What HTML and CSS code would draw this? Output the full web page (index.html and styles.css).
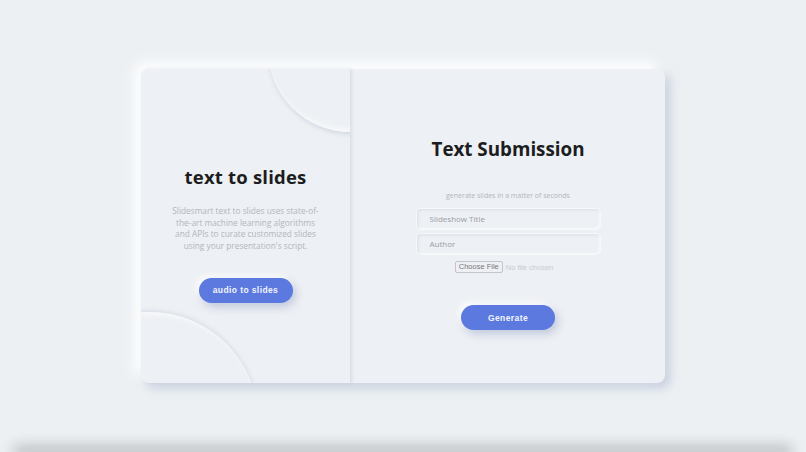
FILE: index.html
```html
<!DOCTYPE html>
<html lang="en">
<head>
<meta charset="utf-8">
<title>Slidesmart</title>
<link rel="stylesheet" href="styles.css">
</head>
<body>
<div class="stage">
  <div class="card">
    <section class="panel panel-left">
      <span class="orb orb-top"></span>
      <span class="orb orb-bottom"></span>
      <h2 class="left-title">text to slides</h2>
      <p class="left-text">Slidesmart text to slides uses state-of-<br>the-art machine learning algorithms<br>and APIs to curate customized slides<br>using your presentation's script.</p>
      <button class="pill pill-left">audio to slides</button>
    </section>
    <section class="panel panel-right">
      <h1 class="right-title">Text Submission</h1>
      <p class="tagline">generate slides in a matter of seconds</p>
      <div class="field">Slideshow Title</div>
      <div class="field">Author</div>
      <div class="file-row">
        <span class="file-btn">Choose File</span>
        <span class="file-none">No file chosen</span>
      </div>
      <button class="pill pill-right">Generate</button>
    </section>
  </div>
</div>
<div class="shelf"></div>
</body>
</html>
```

FILE: styles.css
```css
* { box-sizing: border-box; }
html, body {
  margin: 0;
  height: 452px;
  overflow: hidden;
  background: #ecf0f3;
}
body {
  font-family: "Open Sans", "Liberation Sans", sans-serif;
}
.stage {
  height: 452px;
  padding-top: 69px;
  display: flex;
  justify-content: center;
}
.card {
  width: 524px;
  height: 314px;
  display: grid;
  grid-template-columns: 210px 1fr;
  border-radius: 8px;
  background: #edf0f4;
  box-shadow: -7px -7px 14px rgba(255,255,255,0.95), 5px 5px 10px rgba(170,180,205,0.55);
}
.panel {
  position: relative;
  display: flex;
  flex-direction: column;
  align-items: center;
}
.panel-left {
  overflow: hidden;
  border-radius: 8px 0 0 8px;
  border-right: 1px solid #dde2e9;
  box-shadow: 1px 0 3px rgba(180,190,210,0.35);
  z-index: 1;
  padding-top: 95px;
}
.orb {
  position: absolute;
  border-radius: 50%;
  background: #edf0f4;
}
.orb-top {
  left: 127px;
  top: -101px;
  width: 164px;
  height: 164px;
  box-shadow: 1px 2px 4px rgba(165,178,200,0.4), inset -3px -4px 6px rgba(255,255,255,0.6);
}
.orb-bottom {
  left: -99px;
  top: 243px;
  width: 216px;
  height: 216px;
  box-shadow: 0 -1px 4px rgba(165,178,200,0.35), inset 2px 3px 5px rgba(255,255,255,0.6);
}
.left-title {
  position: relative;
  margin: 0;
  font-size: 18.5px;
  line-height: 26px;
  font-weight: 700;
  color: #1c1d20;
  letter-spacing: 0.2px;
}
.left-text {
  position: relative;
  margin: 15px 0 0;
  font-size: 8.3px;
  line-height: 11.7px;
  color: #b3b6bc;
  text-align: center;
}
.pill {
  position: relative;
  border: 0;
  width: 94px;
  height: 25px;
  border-radius: 13px;
  background: #5b79df;
  color: #f3f5fc;
  font-family: "Liberation Sans", Arial, sans-serif;
  font-weight: 700;
  font-size: 8.5px;
  letter-spacing: 0.4px;
  box-shadow: 3px 4px 8px rgba(110,125,175,0.35), -3px -3px 6px rgba(255,255,255,0.9);
  padding: 0;
}
.pill-left { margin-top: 26px; }
.panel-right { padding-top: 67px; }
.right-title {
  margin: 0;
  font-size: 18.8px;
  line-height: 26px;
  font-weight: 700;
  color: #1c1d20;
}
.tagline {
  margin: 29px 0 0;
  font-size: 7px;
  line-height: 10px;
  color: #b3b6bc;
}
.field {
  width: 183px;
  height: 20px;
  margin-top: 8px;
  border-radius: 4px;
  background: #edf0f4;
  box-shadow: inset 1px 1px 3px rgba(175,185,205,0.3), inset -1px -1px 2px rgba(255,255,255,0.9), 0 0 0 1px rgba(255,255,255,0.5);
  padding-left: 13px;
  font-size: 8px;
  line-height: 20px;
  color: #9a9da3;
}
.field + .field { margin-top: 5px; }
.file-row {
  height: 12px;
  margin-top: 7px;
  margin-left: -8px;
  display: flex;
  align-items: center;
  gap: 3px;
  font-family: "Liberation Sans", Arial, sans-serif;
  font-size: 7.5px;
}
.file-btn {
  height: 12px;
  padding: 0 3px;
  line-height: 10px;
  border: 1px solid #c3c5c9;
  border-radius: 2px;
  background: #eef0f3;
  color: #74777c;
}
.file-none { color: #c9ccd1; }
.pill-right { margin-top: 32px; }
.shelf {
  width: 770px;
  height: 0;
  margin: 0 auto;
  box-shadow: 0 -1px 14px 4px rgba(0,0,0,0.3);
}
```
